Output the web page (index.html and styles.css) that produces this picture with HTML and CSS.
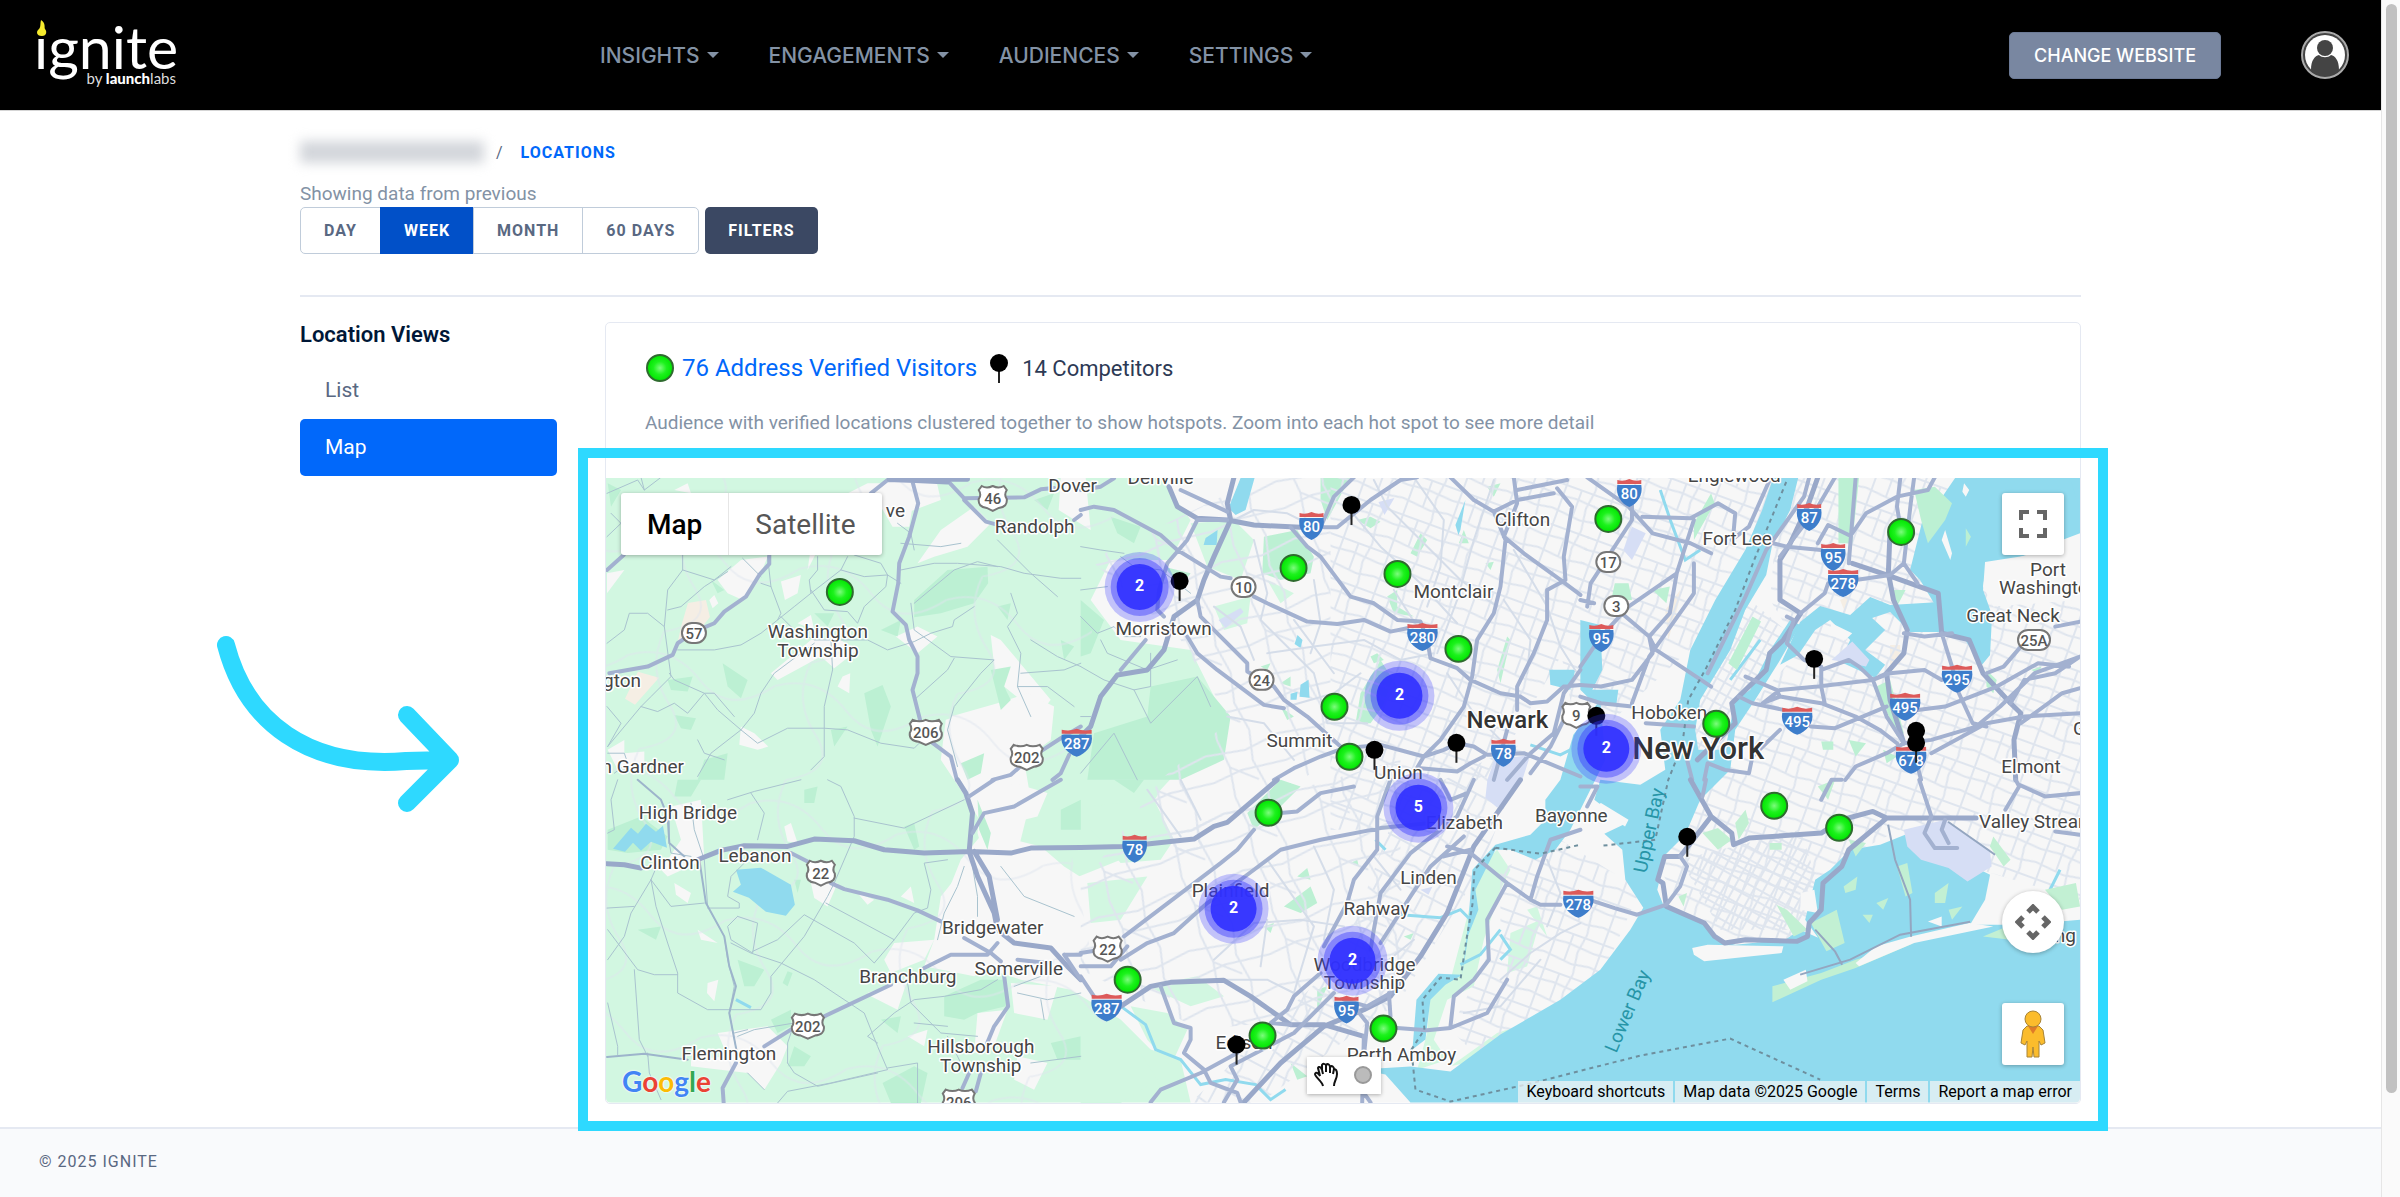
FILE: index.html
```html
<!DOCTYPE html>
<html lang="en">
<head>
<meta charset="utf-8">
<title>Ignite – Locations</title>
<meta name="viewport" content="width=device-width, initial-scale=1">
<link rel="stylesheet" href="styles.css">
</head>
<body>
<div class="app">
  <header class="topbar">
    <a class="logo" href="#" aria-label="Ignite by launchlabs">
      <svg viewBox="0 0 144 72" width="144" height="72" aria-hidden="true">
        <path class="flame" d="M5 1c5 3 3 7 4 9 2 2 2 7-3 7-6 0-6-5-3-7 2-2 1-5 2-9z"/>
        <text class="logo-word" x="-2" y="50">ıgnite</text>
        <text class="logo-by" x="140" y="65" text-anchor="end">by <tspan class="logo-bold">launch</tspan>labs</text>
      </svg>
    </a>
    <nav class="nav">
      <a class="nav-link" href="#">INSIGHTS</a>
      <a class="nav-link" href="#">ENGAGEMENTS</a>
      <a class="nav-link" href="#">AUDIENCES</a>
      <a class="nav-link" href="#">SETTINGS</a>
    </nav>
    <button class="change" type="button">CHANGE WEBSITE</button>
    <a class="avatar" href="#" aria-label="Account">
      <svg viewBox="0 0 48 48" width="48" height="48">
        <circle cx="24" cy="24" r="23" fill="#444" stroke="#aaa" stroke-width="2"/>
        <circle cx="24" cy="24" r="20" fill="#fff"/>
        <circle cx="24" cy="17" r="8" fill="#444"/>
        <path d="M10 39c0-10 4-14 8-15 3 3 9 3 12 0 4 1 8 5 8 15-7 8-21 8-28 0z" fill="#444"/>
      </svg>
    </a>
  </header>

  <main class="page">
    <nav class="crumbs" aria-label="Breadcrumb">
      <span class="redacted" aria-hidden="true"></span>
      <span class="slash">/</span>
      <a href="#">LOCATIONS</a>
    </nav>
    <p class="showing">Showing data from previous</p>
    <div class="ranges">
      <div class="group">
        <button type="button">DAY</button>
        <button type="button" class="active">WEEK</button>
        <button type="button">MONTH</button>
        <button type="button">60 DAYS</button>
      </div>
      <button type="button" class="filters">FILTERS</button>
    </div>
    <hr class="rule">

    <div class="columns">
      <aside class="side">
        <h2>Location Views</h2>
        <a href="#">List</a>
        <a href="#" class="current">Map</a>
      </aside>

      <section class="card">
        <div class="card-head">
          <div class="legend">
            <svg class="ico" viewBox="-15 -15 30 30" width="30" height="30" aria-hidden="true"><use href="#dot"/></svg>
            <a href="#">76 Address Verified Visitors</a>
            <svg class="ico pin-ico" viewBox="-10 -10 20 30" width="20" height="30" aria-hidden="true"><use href="#pin"/></svg>
            <span>14 Competitors</span>
          </div>
          <p>Audience with verified locations clustered together to show hotspots. Zoom into each hot spot to see more detail</p>
        </div>

        <div class="map">
          <svg class="canvas" viewBox="605 478 1475 625" role="img" aria-label="Map of New York and northern New Jersey">
            <defs>
              <radialGradient id="glow"><stop offset="0" stop-color="#7dfb7d"/><stop offset=".5" stop-color="#1df21d"/><stop offset="1" stop-color="#00e400"/></radialGradient>
              <g id="dot"><circle r="13" fill="url(#glow)" stroke="#2f6b2f" stroke-width="2"/></g>
              <g id="pin"><path d="M0 0V20" stroke="#222" stroke-width="2"/><circle r="9"/></g>
              <g id="cluster"><circle r="35" fill="#3333ff" opacity=".27"/><circle r="29" fill="#3333ff" opacity=".42"/><circle r="23" fill="#3030ff" opacity=".9"/></g>
              <g id="is"><path d="M-12-8H12C14 2 8 11 0 14-8 11-14 2-12-8z" fill="#3d7dcb"/><path d="M-12-9V-13Q-6-11 0-14 6-11 12-13V-9z" fill="#dd5a5a"/></g>
              <g id="is3"><path d="M-15-8H15C17 3 9 11 0 14-9 11-17 3-15-8z" fill="#3d7dcb"/><path d="M-15-9V-13Q-7-11 0-14 7-11 15-13V-9z" fill="#dd5a5a"/></g>
              <path id="us" d="M-11-12Q-6-9 0-12 6-9 11-12L14-8Q11-3 14 1 15 9 6 10L0 13-6 10Q-15 9-14 1-11-3-14-8z" fill="#fff" stroke="#777" stroke-width="2"/>
              <path id="us3" d="M-13-12Q-6-9 0-12 6-9 13-12L16-8Q13-3 16 1 17 9 7 10L0 13-7 10Q-17 9-16 1-13-3-16-8z" fill="#fff" stroke="#777" stroke-width="2"/>
              <rect id="st" x="-12" y="-10" width="24" height="20" rx="10" fill="#fff" stroke="#777" stroke-width="2"/>
              <rect id="st3" x="-16" y="-10" width="32" height="20" rx="10" fill="#fff" stroke="#777" stroke-width="2"/>
              <pattern id="g1" width="46" height="38" patternUnits="userSpaceOnUse" patternTransform="rotate(28)"><path class="net" d="M0 8H46M0 25L24 29 46 25M9 0V38M30 0L33 20 30 38M20 8V27"/></pattern>
              <pattern id="g2" width="48" height="42" patternUnits="userSpaceOnUse" patternTransform="rotate(20)"><path class="net" d="M0 4H48M0 16L20 14 48 16M0 30L30 33 48 30M6 0V42M22 4V33M35 0L32 20 35 42"/></pattern>
              <pattern id="g3" width="9" height="11" patternUnits="userSpaceOnUse" patternTransform="rotate(29)"><path class="net" d="M0 3H9M3 0V11"/></pattern>
              <pattern id="g4" width="76" height="60" patternUnits="userSpaceOnUse" patternTransform="rotate(-18)"><path class="net" d="M0 12L40 18 76 12M0 40L30 36 76 40M16 0L20 30 16 60M50 0L44 30 50 60M20 30L44 50"/></pattern>
              <pattern id="g5" width="150" height="120" patternUnits="userSpaceOnUse" patternTransform="rotate(12)"><path class="net" d="M0 30Q40 10 75 40T150 30M30 0Q20 40 50 70T30 120"/></pattern>
            </defs>

            <rect x="605" y="478" width="1475" height="625" fill="#f7f7f7"/>

            <!-- countryside -->
            <path class="green" d="M605 478H890L873 500 900 515 940 500 935 478H1060L1058 510 1090 530 1085 478H1160L1190 520 1170 560 1110 560 1090 600 1120 640 1190 650 1215 700 1225 720 1160 790 1120 860 1070 880 1015 860 1030 800 1020 740 1050 700 1000 640 990 635 995 680 1020 700 995 705 945 720 940 760 960 790 985 830 960 860 940 910 935 950 960 960 1020 980 1070 990 1120 1020 1150 1050 1180 1060 1190 1103H605z"/>
            <g class="land" transform="translate(580 440) scale(.3334)">
              <path d="M780 170L860 130 930 130 1000 170 985 260 935 260 900 200zM1010 370L1080 270 1180 200 1230 250 1160 320 1060 350zM410 420L480 360 560 350 540 400 485 480 440 460zM600 425L660 405 650 460 612 480zM690 320L720 310 680 390zM650 550L690 525 700 570zM690 600L770 595 830 630 760 685 720 650 590 720 570 700zM480 860L520 880 562 920 530 930 475 915zM78 400L130 390 78 460zM770 740L785 710 808 700 805 760zM945 590L1010 560 1070 590 1010 640zM280 150L320 130 330 160zM385 480L400 465 412 490 395 505zM80 930L130 900 130 940 190 935 190 975 110 990zM1110 830L1250 790 1340 760 1420 800 1410 900 1330 960 1200 1010 1130 1000z"/>
            </g>
            <g class="land" transform="translate(580 780) scale(.3334)">
              <path d="M270 80L360 60 370 240 260 290 240 270 300 180zM610 140L630 130 650 190 620 185zM690 310L770 310 740 380 700 355zM280 310L330 340 320 370 285 345zM380 610L412 600 400 665 378 640zM350 450L410 490 360 480zM410 760L560 740 620 800 600 850 550 930 500 880 330 860 330 840 440 830zM860 640L980 600 950 690 870 650zM940 490L1060 480 1030 540 930 580 910 540zM980 770L1040 750 1030 800zM960 350L990 320 1000 370zM830 340L880 360 860 375zM1080 350L1160 250 1200 330 1220 440 1300 520 1180 590 1030 560 1060 480z"/>
              <path d="M1200 60L1300 10 1400 40 1370 110 1290 130 1300 180 1380 200 1450 260 1560 330 1540 420 1380 400 1290 280 1210 230 1190 160zM1290 610L1430 620 1400 720 1300 700zM1190 700L1280 690 1240 800 1180 820zM1310 830L1400 850 1360 930 1300 900z"/>
            </g>
            <g class="wood" transform="translate(580 440) scale(.3334)">
              <path d="M1000 480L1100 390 1220 380 1222 430 1180 490 1080 520 1000 532zM850 760L905 735 930 800 890 920 870 870zM425 670L500 720 480 775 440 740zM260 720L335 710 320 755 270 750zM280 825L345 835 330 870 300 865zM700 520L760 520 740 560zM900 570L960 540 950 590zM750 870L800 860 760 920zM1250 500L1290 490 1280 540zM1230 690L1290 680 1270 740 1290 780 1260 810zM1360 180L1420 160 1400 210zM390 420L430 450 410 460zM1140 970L1210 940 1200 1000 1160 1020zM370 960L440 940 430 1020 350 1020zM1440 600L1480 620 1450 660zM80 130L120 150 90 200z"/>
            </g>
            <g class="wood" transform="translate(580 780) scale(.3334)">
              <path d="M80 150L180 110 260 170 240 210 140 220 80 210zM290 0L360 0 330 50 280 50zM1090 650L1200 600 1275 600 1275 680 1190 700 1150 720 1090 710zM905 910L1000 860 1040 880 1020 970 930 970zM640 800L690 830 670 860 620 860zM570 720L630 690 630 740 590 760zM170 450L240 440 225 480zM470 540L550 570 520 620 490 620zM620 575L635 580 620 620 605 610zM970 140L1000 130 1015 200 1000 210zM640 300L660 300 650 340zM1190 60L1230 160 1220 210 1195 150zM900 720L960 710 950 760zM1440 90L1500 60V150H1440zM1410 790L1500 770V840L1430 840zM670 30L710 20 700 70 670 70z"/>
            </g>
            <g class="wood" transform="translate(1080 440) scale(.3334)">
              <path d="M40 880L200 830 210 740 350 710 450 830 430 960 300 1020 20 1020zM0 480L70 540 30 640 0 650zM720 112L810 112 740 240 720 180zM550 290L650 270 700 350 690 400 600 420 545 400zM830 240L870 230 900 245 870 265zM990 340L1020 280 1040 300 1010 350zM840 760L900 660 950 740 870 850 825 850zM870 650L890 640 910 660 880 670zM920 470L950 450 950 500 1000 530 940 520zM1220 140L1260 130 1240 170zM1215 370L1240 365 1230 390zM1150 270L1165 310 1135 310zM600 730L630 710 630 740zM540 680L570 670 560 690zM1250 690L1280 590 1290 600 1260 730zM600 800L640 830 620 840zM90 230L180 260 160 310 110 280zM250 380L330 400 300 440z"/>
              <path class="green" d="M460 240L520 300 480 420 380 380 330 250zM400 500L510 470 500 550 430 570zM560 420L640 460 600 490zM60 130L240 170 140 210 40 200z"/>
            </g>
            <g class="wood" transform="translate(1080 780) scale(.3334)">
              <path d="M500 100L600 0 660 20 590 90 520 150zM590 20L630 10 640 40zM610 380L690 320 710 370 660 400zM650 290L680 265 690 300zM970 470L1000 460 990 480zM550 440L580 430 570 460zM710 630L740 620 710 690zM100 0L190 0 160 40zM60 140L120 130 110 180zM630 850L680 890 650 900zM810 250L830 240 835 260z"/>
              <path class="green" d="M20 80L220 60 280 180 240 240 120 250 60 180 30 150zM20 310L200 290 120 420 30 430zM200 620L350 590 430 650 330 680zM150 680L260 700 320 750 270 860 200 780zM0 700L80 720 180 820 230 900 120 970 0 970zM1200 260L1250 210 1290 270 1260 330 1210 480 1180 620 1100 660 1060 780 1100 840 1010 870 1040 760 1050 640 1110 600zM1290 460L1380 420 1340 560 1280 580zM1340 390L1370 380 1400 470zM1250 760L1400 710 1290 820 1110 860z"/>
            </g>
            <path class="sand" d="M680 627L687 603 705 600 709 617 690 641 677 641zM637 672L658 678 634 705 624 699zM1840 600L1850 595 1845 613zM1665 610L1680 590 1678 605 1668 640zM1890 645H1900V665H1890z"/>

            <!-- street grids -->
            <path fill="url(#g5)" d="M605 478H1120L1060 800 1120 1103H605z" opacity=".5"/>
            <path fill="url(#g4)" d="M1090 560L1260 478H1330V760L1200 850 1100 860 1160 780 1230 720 1180 640z"/>
            <path fill="url(#g4)" d="M1080 870L1260 800 1400 760V1010L1200 1030 1080 970z"/>
            <path fill="url(#g2)" d="M1330 478H1600L1570 640 1500 760 1420 830 1330 830z"/>
            <path fill="url(#g1)" d="M1400 800L1530 740 1480 870 1400 1000 1260 1103H1190L1340 960z"/>
            <path fill="url(#g2)" d="M1600 478H1780L1700 640 1580 750 1560 650z"/>
            <path fill="url(#g2)" d="M1500 870L1560 840 1640 890 1600 980 1480 1060 1450 1030 1500 930z"/>
            <path fill="url(#g2)" d="M1780 478H1950V600L2080 560V900L1980 870 1900 830 1840 860 1800 950 1700 940 1660 870 1720 740 1800 650 1770 600z"/>
            <path fill="url(#g3)" d="M1750 600L1785 630 1730 730 1720 760 1690 750 1700 690zM1680 860L1800 830 1820 890 1800 930 1720 930z"/>

            <!-- water -->
            <g class="water">
              <path d="M1773 478H1798L1790 510 1772 545 1766 575 1745 610 1730 650 1700 700 1695 730 1698 750 1725 750 1735 700 1750 690 1770 650 1790 620 1800 625 1780 660 1755 700 1735 730 1730 770 1700 800 1685 835 1665 855 1657 890 1663 905 1680 911 1700 920 1715 940 1735 945 1785 940 1800 930 1818 938 1805 920 1815 880 1830 870 1850 850 1880 845 1905 835 1960 860 1990 875 1985 900 1970 925 1990 925 2025 925 2080 920V1103H1410L1385 1075 1360 1070 1410 1067 1450 1072 1500 1035 1560 1000 1600 970 1630 930 1643 908 1625 880 1622 850 1604 834 1625 824 1594 800 1600 780 1640 785 1665 770 1660 730 1680 700 1690 650 1715 600 1745 550 1762 510z"/>
              <path d="M1955 478H2080V535L2060 560 2030 555 1985 562 1983 590 1992 615 1990 655 1982 665 1965 640 1943 632 1935 605 1920 580 1910 570 1920 530 1925 510 1940 500z"/>
              <path d="M1800 622L1820 606 1850 615 1870 597 1890 605 1940 602 1943 632 1910 632 1890 612 1872 618 1885 630 1865 650 1885 665 1875 678 1840 662 1850 640 1830 620 1815 630 1798 655 1780 665z"/>
              <path d="M1573 735L1600 700 1605 760 1570 830 1555 850 1535 860 1510 850 1495 850 1475 890 1478 910 1468 935 1462 975 1445 985 1430 1000 1425 1040 1412 1050 1416 1000 1438 974 1462 975 1468 920 1472 870 1495 845 1530 835 1545 820 1545 800 1560 780z"/>
              <path d="M1580 620L1600 625 1602 670 1592 690 1618 690 1616 705 1590 700 1580 690zM1549 670L1575 670 1570 690 1550 685z"/>
              <path d="M1240 478H1254L1245 510 1235 515 1228 508zM1205 538L1217 530 1216 545 1203 545zM1297 635L1302 640 1300 648 1294 644zM1300 685L1308 680 1309 698 1299 697zM1290 694L1297 692 1296 700 1290 700z"/>
              <path d="M735 870L760 868 790 885 794 905 785 916 765 912 748 898 732 892 740 885zM612 849L630 828 637 834 645 824 655 832 662 826 666 848 650 842 640 851 632 843 624 852zM1465 500L1460 530 1458 535 1455 525zM2070 478L2080 480V510z"/>
            </g>
            <path class="creek" d="M1122 1008L1145 1025 1155 1050 1180 1060 1200 1085 1225 1080 1255 1085 1270 1100 1285 1090M1660 490L1670 520 1685 560 1700 550M1400 915L1440 918 1460 910 1470 920M1500 930L1480 955 1460 965M1500 935L1510 950 1500 960M1760 640L1730 680M2060 870L2050 890 2070 900M1375 840L1385 850M1590 740L1560 755 1530 745M735 1000L750 1008"/>
            <g class="land" transform="translate(1580 780) scale(.3444 .3334)">
              <path d="M325 505L370 495 590 500 585 520 360 545 330 525z"/>
              <path class="wood" d="M558 620L700 580 800 540 970 490 800 565 700 600 558 668zM670 430L745 390 768 490 715 515zM570 375L600 390 660 450 620 470zM765 320L805 290 800 330 770 340zM860 370L895 355 880 390zM920 260L950 250 965 340 945 350zM1030 340L1070 310 1060 370 1030 370zM820 405L850 405 840 430zM780 180L830 190 800 230zM1070 390L1110 380 1080 420zM1350 330L1440 310 1452 380 1400 390zM1170 470L1240 440 1250 480z"/>
              <path d="M800 550L860 500 960 470 1130 430 1200 440 970 490 810 560zM590 600L655 570 660 605 610 630zM60 70L140 120 130 140 40 80zM640 340L680 330 690 400 640 390zM1010 425L1050 410 1050 440z"/>
              <path class="air" d="M940 150L1060 120 1190 210 1195 260 1125 305 1070 265 990 240 950 200z"/>
              <path class="wood" d="M355 160L400 145 440 180 400 210zM450 130L480 90 490 130 460 180zM690 20L740 0 720 60zM1200 170L1250 240 1230 260 1190 200zM285 350L310 340 300 380zM550 190H585V210H550z"/>
            </g>
            <g class="wood" transform="translate(1580 440) scale(.3444 .3334)">
              <path d="M970 150L1030 140 1080 190 1060 240 1010 310 990 240zM1120 265L1135 290 1120 320zM430 670L500 530 525 545 455 690zM750 112H810L790 310 750 310zM100 430L140 430 150 480 90 480zM210 450L260 440 250 490zM900 450L945 450 920 500zM330 250L380 160 390 190 330 300zM1180 690L1210 720 1200 760 1180 740zM700 905H735V930H705zM780 900L830 910 800 950zM880 930L920 950 890 970zM1310 690L1340 680 1330 700zM860 740L900 720 940 880 920 890z"/>
              <path class="land" d="M730 550L790 580 770 600 720 585zM1060 270L1080 340 1075 360 1050 300zM1115 130L1130 150 1120 170 1110 155zM1180 380L1220 370 1340 330 1400 300 1452 280V480L1200 500 1170 440z"/>
              <path class="air" d="M730 660L790 605 840 660 830 680 760 665zM150 260L190 280 150 360 125 330z"/>
            </g>
            <path class="air" d="M1494 760L1530 755 1522 780 1497 808 1485 798 1487 780zM1218 620L1240 608 1243 612 1225 628zM1378 502L1394 498 1384 515zM1420 890L1432 887 1428 895z"/>

            <!-- local roads -->
            <g class="minor" transform="translate(580 440) scale(.3334)">
              <path d="M78 160L170 120 190 150 240 112M190 150L180 112M78 290L120 250 90 220M305 345L305 390 260 450 250 560 270 710 210 770 180 800 80 920M305 390L400 420 450 380M260 510L300 500 370 440 440 395M560 350L570 440 600 520 590 540 640 500 690 460 780 390 800 350M690 460L685 420 710 390 710 350M690 450L730 510 800 515 830 550 850 500 915 440 920 405 850 410 780 390M540 430L570 440M600 530L640 570 700 600 860 600 920 630 1000 605 1050 580 1115 560 1120 540 1180 500M290 630L400 630 480 615 540 580 590 540M750 600L755 690 730 800 730 870 730 950 690 990M700 610L580 700 540 760 520 820 480 870 390 940 350 1010M480 870L530 910 620 865 730 865 800 870 900 910 1000 925 1015 910M480 870L410 810 370 760 280 720 265 700M180 800L230 815 280 790 320 820 370 760 400 760 460 830M78 610L130 570 145 520 200 520 250 560M78 800L120 850 80 920M485 355L540 410M820 345L900 370 920 405 960 430M960 390L1060 370 1130 370 1260 380 1330 400 1440 415 1500 415M1000 490L1120 390 1190 365 1250 380M990 490L1000 570 1110 650 1240 660 1200 700 1120 800 1100 870 1130 980M1250 300L1350 400 1430 470M1290 460L1310 520 1280 560 1320 640 1310 740 1350 830M1350 600L1430 650 1500 680M1000 780L1100 690 1120 655M1310 740L1400 740 1480 800M960 310L1080 320 1140 310M950 250L990 280 1000 330M350 900L370 940 430 960M80 940L130 940 140 970 100 1000M1320 700L1450 690 1500 670"/>
            </g>
            <g class="minor" transform="translate(580 780) scale(.3334)">
              <path d="M110 0L90 60 100 150 80 160M265 70L265 190 270 220 330 230M330 70L340 150 370 240 380 380 430 470 440 540 460 620 445 700 470 830M240 230L210 300 270 380 370 370M210 300L150 400 130 470 80 540M210 300L225 380 260 490 290 580 290 640 380 690 450 690 540 690 570 640 570 590 670 470 740 350 760 310 820 170 820 110 780 20 740 0M78 385L160 380M80 450L170 570 220 585 290 585M160 570L175 780 200 830M80 670L110 800 110 825M200 820L205 880 240 960M510 40L550 100 530 180M440 60L520 35 660 0M820 115L970 145 1150 60M380 385L475 385 475 370 440 350 450 290 490 250M470 410L440 440 450 480 515 520 530 430 470 410M515 515L590 480 670 405 820 490 880 550 940 480 1000 400 1040 385 1050 330 1030 250 1100 240M735 370L940 480M450 490L510 520 600 550 700 600 850 700 890 800 920 870 750 910 620 935 590 970M890 790L860 770 940 700 1000 660 1090 650 1200 630 1250 600M980 610L990 670 1080 760 1190 770M500 750L460 760M620 850L640 880 710 920 890 880M920 865L1010 850 1010 970M500 880L550 930M1350 850L1500 830M1300 620L1380 590M1310 640L1400 660 1500 640M1380 660L1390 720M1000 730L1100 740M620 850L620 790 640 730 520 750 470 770M1070 480L1090 400 1130 320 1150 260M1260 260L1330 350 1480 410M1170 230L1190 350 1190 410M1100 770L1150 870"/>
              <path class="wide" d="M170 0L240 60 260 110 265 190 310 230M78 832L190 822 320 840M355 240L375 370 430 470 445 560 465 620 445 700 470 830"/>
            </g>
            <g class="minor" transform="translate(1080 440) scale(.3334)">
              <path d="M0 530L50 580 100 560 130 590 180 590M0 680L70 720 160 750 210 740 210 640M160 750L210 850 350 710 390 800M0 1000L100 880 170 1020M0 830L30 830M0 450L80 440M0 320L60 330 130 340M120 350L160 380 240 390 330 460M60 600L80 640 200 690 290 660"/>
            </g>
            <g class="pale" transform="translate(1080 440) scale(.3334)">
              <path d="M460 240L520 210 620 220 660 240M520 300L560 460 540 540 640 640 700 700 740 850 860 850M400 500L480 560 520 660M560 640L700 620 850 600 960 660 1060 640M700 420L720 550 690 640M640 540L760 700M880 120L920 200 1060 340 1140 420 1250 500M800 200L900 320 1020 430 1130 550M1000 112L1090 240 1080 380 1040 500M620 800L760 760 840 700M440 830L550 850 640 960M940 450L1010 560M1240 120L1180 300 1130 480 1070 640M1300 330L1400 500 1440 620 1490 700M1270 480L1350 600 1340 700M1100 700L1180 820 1260 900"/>
            </g>
            <g class="pale" transform="translate(1080 780) scale(.3334)">
              <path d="M560 240L700 440 640 640M700 200L760 330 730 480M400 540L520 430 660 420 790 440M420 600L560 600 640 640M880 230L960 330M1000 480L900 560 930 640M1260 600L1350 520 1440 460 1500 430M1150 700L1260 680 1380 540M1400 240L1440 340 1400 440M300 0L360 120M200 30L300 170M560 420L540 560"/>
            </g>

            <!-- highways -->
            <g class="major" transform="translate(580 440) scale(.3334)">
              <path d="M78 390L128 345M565 345L565 372 535 405 495 470 430 515 400 550 340 575 290 610 275 645 200 680 85 700M870 160L920 120 1100 122 1150 175 1330 172 1380 148 1420 144M1150 180L1215 245 1290 265M995 125L1012 190 985 290 955 370 952 430 935 515 975 555 985 600 1010 650 1010 700 995 750 1015 830 1030 890 1110 950 1128 1020M1235 1020L1290 1005 1340 960 1440 895 1500 860M1465 945L1440 1000 1415 1020M1480 240L1500 225"/>
              <path class="big" d="M925 118L1100 126M930 116L1160 118"/>
            </g>
            <g class="major" transform="translate(580 780) scale(.3334)">
              <path class="big" d="M78 252L130 255 180 265M350 240L420 212 490 198 620 200 700 178 820 183 910 210 1030 220 1170 215 1290 220 1350 205 1500 203M1130 0L1155 40 1175 100 1165 215 1190 290 1240 400 1250 450 1300 490 1410 505 1460 560 1500 600M1180 215L1225 290 1250 420"/>
              <path d="M630 220L680 245M750 310L790 328 920 360 1010 392 1080 425M1150 475L1230 520 1260 545M1440 0L1300 80 1210 100 1175 160M1030 565L1110 525 1220 525 1250 490M1450 525H1500M1310 540L1400 550M730 710L930 615M630 750L550 800M465 850L425 925 428 968M1270 590L1282 680 1240 740 1215 800M1165 880L1145 925M1200 880L1185 935M1240 0L1165 50M1500 600L1450 525"/>
            </g>
            <g class="major" transform="translate(1080 440) scale(.3334)">
              <path class="big" d="M460 112L440 190 450 240 400 350 370 420 350 480 280 530 250 630 200 690 110 705 60 770 30 860 0 890M265 140L290 200 350 235 440 240 520 255 660 262"/>
              <path d="M0 210L40 200 100 210 240 285 290 330 420 410 450 415M300 150L440 215M440 240L350 240 320 300 260 370 235 450 230 510 250 530M195 600L120 690M0 150L60 140 100 115M350 480L360 530 420 590 500 670 500 695 580 740 610 780 680 830 780 920M610 805L550 795 410 690 350 640 320 590M520 470L560 490 680 545 770 552 850 540 930 575 980 565M630 262L680 320 720 350 810 470 880 490 950 540 1020 545 1040 600 1050 655 1130 685 1170 720 1260 760 1320 770 1350 790 1400 785 1450 740 1500 735M730 262L770 262 870 180 960 120 1010 112M720 262L760 170 820 112M1110 112L1180 180 1240 215 1275 300 1260 440 1240 520 1190 600 1175 710 1150 800 1080 900 1030 950 1000 1000M1240 215L1310 180 1420 160M1300 112L1310 190 1270 290 1330 340 1440 420 1500 465M1310 150L1460 120M1430 145L1475 200 1450 350 1455 420 1400 450 1400 540 1360 640 1310 740 1310 810M580 1020L640 985 720 950 790 925 900 915 1030 950 1090 930 1130 910 1180 920 1220 945 1330 940 1380 960 1500 1010M1020 985L1130 995 1170 970 1210 950M1240 1020L1280 870M1280 1020L1350 940 1420 880 1450 760 1500 690M1350 1000L1410 920 1450 840"/>
            </g>
            <g class="major" transform="translate(1080 780) scale(.3334)">
              <path class="big" d="M0 203L130 200 340 178 400 140 440 128 590 0M1320 0L1180 200 1100 400 1020 530 930 650 850 690 730 740 600 850 490 968M120 680L210 620 270 608 430 602 510 650 630 735 730 735 850 770"/>
              <path d="M600 100L650 95 720 40 820 20M520 150L470 210 420 250 130 470M480 300L600 210 720 180 900 145 1050 130M280 460L380 370 480 300M0 520L60 510M120 540L200 490 280 460M0 560L90 560 140 500M930 0L890 110 890 210 820 300 800 370 730 500M1180 0L1130 110 990 220 900 340 880 450 870 510M1150 170L1050 260 990 350 900 490M1100 200L1170 220 1280 310 1350 360 1380 375 1440 375M1090 230L1170 210M1280 310L1220 420 1225 540 1180 600 1120 650 1110 740M950 745L1040 752 1110 745 1220 700 1280 600M1500 150L1410 180 1370 290 1350 360M630 735L570 730 620 690 640 650 720 580M430 968L470 900 450 860 640 760 760 640M210 968L240 930 360 880 470 820M240 620L280 730 330 745 330 780 310 820 370 870 390 910 470 940 480 968M850 770L845 968M925 640L930 710M820 680L860 730 850 830M0 590L40 650M870 968L850 940M790 660L860 680 930 640M1080 0L1110 60 1160 40"/>
            </g>
            <g class="major" transform="translate(1580 440) scale(.3444 .3334)">
              <path class="big" d="M690 112L660 200 610 310 580 360 580 480 640 520 590 600 550 640 540 690 440 790 450 850 340 960M790 370L890 405 1040 460 1050 580 1130 600 1170 700 1250 790 1280 820 1260 900 1265 1020M900 270L895 400 910 480 950 570 940 640 890 700 900 780 940 910"/>
              <path d="M20 112L140 200 210 280 320 310 380 340M150 180L150 240 30 430 20 500 M180 230L320 235 400 190 450 220 445 280M0 480L40 490M330 240L280 400 140 500 60 590 0 680M120 520L200 590 220 630 380 740M200 590L210 640 150 720 60 740 0 735M200 590L260 520 280 400M330 370L330 460 200 650 150 790M550 120L490 260 440 300M800 112L780 370M665 112L650 170 540 330 480 470 370 700M740 112L690 200 580 350M700 330L600 320 560 310M690 310L720 255 780 285M1030 112L1010 150 920 170 830 220 790 280M930 112L920 200 935 290M970 112L960 190 940 370 980 430M800 420L900 405 940 370M640 520L710 460 720 430M600 530L620 540 600 610 650 660 700 680 700 740 710 790M700 690L780 660 810 680 850 720 890 830 940 910M850 720L890 700M530 790L580 750 690 740 850 720 900 700 1000 690 1050 720M530 790L580 770M480 710L570 750 580 770 700 790 800 830 870 870 920 910M460 770L500 790 590 810M670 860L740 865 890 800M770 1020L800 980 890 940 940 910 1020 900 1150 860 1220 800 1320 700 1452 650M980 810L1060 800 1210 740 1330 670 1420 680M1050 580L1080 680 1100 760 1140 850 1180 860M1180 700L1230 680 1280 620M1380 560L1452 545M1020 940L1180 850 1290 830 1452 820M1250 790L1290 720 1380 700 1452 650M1280 850L1400 760 1452 745M940 580L1000 590 1080 580M980 980L990 1020M360 1020L370 970 420 990 490 1000 500 950 580 870M310 960L325 1020M0 770L60 790 150 800M190 850L330 860"/>
            </g>
            <g class="major" transform="translate(1580 780) scale(.3444 .3334)">
              <path class="big" d="M320 0L380 110 440 160 445 195 490 175 700 160 760 120 850 95 890 115 1030 115 1150 115M890 115L780 210 760 260 705 310 700 390 665 430 660 470 630 485 480 480 420 490 390 470 360 430 250 380 240 310 225 300 245 230 290 230 380 110"/>
              <path d="M290 230L310 260 290 320 250 375 165 405 100 385 40 365M700 60L730 0 760 0M985 0L1020 110 1000 160 1030 205 1095 205M1060 120L1050 150 1070 190M1235 90L1275 20 1265 0M1275 15L1350 50 1452 40M365 0L355 50M1380 155L1452 165M0 20L50 20 20 80"/>
            </g>
            <path class="rail" d="M1888 825L1895 860 1910 900 1911 937M1815 930L1835 952 1842 965M1800 975L1850 960 1900 935 1970 922M1948 822L1995 855"/>
            <path class="border" d="M1786 482L1754 560 1735 610 1705 670 1688 700 1682 745 1668 780 1655 840 1602 846M1495 848L1540 854 1580 845M1495 848L1474 870 1472 905 1466 940 1460 980 1440 978 1422 1000 1424 1030 1411 1050 1415 1090 1450 1102 1530 1084 1640 1056 1730 1039 1820 1080"/>

            <!-- place names -->
            <g class="place">
              <text x="885" y="517">ve</text><text x="1034" y="533" class="mid">Randolph</text><text x="1072" y="492" class="mid">Dover</text>
              <text x="817" y="638" class="mid">Washington</text><text x="817" y="657" class="mid">Township</text>
              <text x="640" y="687" class="end">Washington</text><text x="683" y="773" class="end">Glen Gardner</text>
              <text x="1160" y="484" class="mid">Denville</text><text x="1163" y="635" class="mid">Morristown</text><text x="1453" y="598" class="mid">Montclair</text>
              <text x="1522" y="526" class="mid">Clifton</text><text x="1299" y="747" class="mid">Summit</text><text x="1398" y="779" class="mid">Union</text>
              <text x="1734" y="482" class="mid">Englewood</text><text x="1737" y="545" class="mid">Fort Lee</text>
              <text x="2048" y="576" class="mid">Port</text><text x="1999" y="594">Washington</text><text x="2013" y="622" class="mid">Great Neck</text>
              <text x="1669" y="719" class="mid">Hoboken</text><text x="2031" y="773" class="mid">Elmont</text><text x="2073" y="735">Garden City</text>
              <text x="687" y="819" class="mid">High Bridge</text><text x="669" y="869" class="mid">Clinton</text><text x="754" y="862" class="mid">Lebanon</text>
              <text x="992" y="934" class="mid">Bridgewater</text><text x="1018" y="975" class="mid">Somerville</text><text x="907" y="983" class="mid">Branchburg</text>
              <text x="728" y="1060" class="mid">Flemington</text><text x="980" y="1053" class="mid">Hillsborough</text><text x="980" y="1072" class="mid">Township</text>
              <text x="1230" y="897" class="mid">Plainfield</text><text x="1464" y="829" class="mid">Elizabeth</text><text x="1428" y="884" class="mid">Linden</text>
              <text x="1376" y="915" class="mid">Rahway</text><text x="1364" y="971" class="mid">Woodbridge</text><text x="1364" y="989" class="mid">Township</text>
              <text x="1215" y="1049">Edison</text><text x="1401" y="1061" class="mid">Perth Amboy</text><text x="1571" y="822" class="mid">Bayonne</text>
              <text x="1979" y="828">Valley Stream</text><text x="2076" y="942" class="end">Long</text>
              <text x="1507" y="728" class="mid city">Newark</text><text x="1698" y="759" class="mid metro">New York</text>
            </g>
            <g class="bay">
              <text class="mid" transform="translate(1655 832) rotate(-78)">Upper Bay</text>
              <text class="mid" transform="translate(1633 1014) rotate(-67)">Lower Bay</text>
            </g>

            <!-- route shields -->
            <g class="shield white">
              <g transform="translate(1311 526)"><use href="#is"/><text y="6">80</text></g>
              <g transform="translate(1422 637)"><use href="#is3"/><text y="6">280</text></g>
              <g transform="translate(1503 753)"><use href="#is"/><text y="6">78</text></g>
              <g transform="translate(1076 743)"><use href="#is3"/><text y="6">287</text></g>
              <g transform="translate(1629 493)"><use href="#is"/><text y="6">80</text></g>
              <g transform="translate(1809 517)"><use href="#is"/><text y="6">87</text></g>
              <g transform="translate(1833 557)"><use href="#is"/><text y="6">95</text></g>
              <g transform="translate(1843 583)"><use href="#is3"/><text y="6">278</text></g>
              <g transform="translate(1601 638)"><use href="#is"/><text y="6">95</text></g>
              <g transform="translate(1957 679)"><use href="#is3"/><text y="6">295</text></g>
              <g transform="translate(1905 707)"><use href="#is3"/><text y="6">495</text></g>
              <g transform="translate(1797 721)"><use href="#is3"/><text y="6">495</text></g>
              <g transform="translate(1911 760)"><use href="#is3"/><text y="6">678</text></g>
              <g transform="translate(1134 849)"><use href="#is"/><text y="6">78</text></g>
              <g transform="translate(1106 1008)"><use href="#is3"/><text y="6">287</text></g>
              <g transform="translate(1346 1010)"><use href="#is"/><text y="6">95</text></g>
              <g transform="translate(1578 904)"><use href="#is3"/><text y="6">278</text></g>
            </g>
            <g class="shield">
              <g transform="translate(992 498)"><use href="#us"/><text y="6">46</text></g>
              <g transform="translate(925 732)"><use href="#us3"/><text y="6">206</text></g>
              <g transform="translate(1026 757)"><use href="#us3"/><text y="6">202</text></g>
              <g transform="translate(820 873)"><use href="#us"/><text y="6">22</text></g>
              <g transform="translate(807 1026)"><use href="#us3"/><text y="6">202</text></g>
              <g transform="translate(958 1102)"><use href="#us3"/><text y="6">206</text></g>
              <g transform="translate(1107 949)"><use href="#us"/><text y="6">22</text></g>
              <g transform="translate(1576 715)"><use href="#us"/><text y="6">9</text></g>
              <g transform="translate(693 633)"><use href="#st"/><text y="6">57</text></g>
              <g transform="translate(1243 587)"><use href="#st"/><text y="6">10</text></g>
              <g transform="translate(1261 680)"><use href="#st"/><text y="6">24</text></g>
              <g transform="translate(1608 562)"><use href="#st"/><text y="6">17</text></g>
              <g transform="translate(1616 606)"><use href="#st"/><text y="6">3</text></g>
              <g transform="translate(2034 640)"><use href="#st3"/><text y="6">25A</text></g>
            </g>

            <!-- competitors, visitors and clusters -->
            <use href="#pin" x="1351" y="505"/><use href="#pin" x="1179" y="581"/><use href="#pin" x="1374" y="750"/><use href="#pin" x="1456" y="743"/>
            <use href="#pin" x="1596" y="716"/><use href="#pin" x="1814" y="659"/><use href="#pin" x="1916" y="731"/><use href="#pin" x="1916" y="743"/>
            <use href="#pin" x="1236" y="1045"/><use href="#pin" x="1687" y="837"/>
            <use href="#dot" x="839" y="592"/><use href="#dot" x="1293" y="568"/><use href="#dot" x="1397" y="574"/><use href="#dot" x="1458" y="649"/>
            <use href="#dot" x="1334" y="707"/><use href="#dot" x="1349" y="757"/><use href="#dot" x="1608" y="519"/><use href="#dot" x="1901" y="532"/>
            <use href="#dot" x="1716" y="724"/><use href="#dot" x="1268" y="813"/><use href="#dot" x="1127" y="980"/><use href="#dot" x="1262" y="1036"/>
            <use href="#dot" x="1383" y="1029"/><use href="#dot" x="1774" y="806"/><use href="#dot" x="1839" y="828"/>
            <g class="count">
              <g transform="translate(1139 587)"><use href="#cluster"/><text y="4">2</text></g>
              <g transform="translate(1399 696)"><use href="#cluster"/><text y="4">2</text></g>
              <g transform="translate(1418 808)"><use href="#cluster"/><text y="4">5</text></g>
              <g transform="translate(1606 749)"><use href="#cluster"/><text y="4">2</text></g>
              <g transform="translate(1233 909)"><use href="#cluster"/><text y="4">2</text></g>
              <g transform="translate(1352 961)"><use href="#cluster"/><text y="4">2</text></g>
            </g>
          </svg>

          <div class="types">
            <button type="button" class="on">Map</button>
            <button type="button">Satellite</button>
          </div>
          <button type="button" class="ctl full" aria-label="Toggle fullscreen view">
            <svg viewBox="0 0 28 28" width="28" height="28"><path d="M2 10V2H10M18 2H26V10M26 18V26H18M10 26H2V18" fill="none" stroke="#666" stroke-width="4"/></svg>
          </button>
          <button type="button" class="ctl camera" aria-label="Map camera controls">
            <svg viewBox="-18 -18 36 36" width="36" height="36"><path d="M-5-10L0-15 5-10M-5 10L0 15 5 10M-10-5L-15 0-10 5M10-5L15 0 10 5" fill="none" stroke="#666" stroke-width="5"/></svg>
          </button>
          <button type="button" class="ctl street" aria-label="Drag Pegman onto the map to open Street View">
            <svg viewBox="0 0 26 48" width="26" height="48" stroke="#a88436" stroke-width="1"><path d="M7 16L3 20 1 33 5 35 7 31V47H12L13 37 14 47H19V31L21 35 25 33 23 20 19 16z" fill="#fbbc2c"/><path d="M8 16H18L13 24z" fill="#e07b28" stroke="none"/><circle cx="13" cy="9" r="8" fill="#fbbc2c"/></svg>
          </button>
          <div class="draw">
            <button type="button" aria-label="Stop drawing">
              <svg viewBox="0 0 24 26" width="24" height="26"><path d="M9 24C8 19 1 15 1 12 2 9 5 12 6 14L4 6C5 4 7 5 8 8L8 3C9 1 11 2 12 3 14 1 16 3 16 5 18 3 20 5 20 7 22 7 23 9 23 12 23 17 20 19 20 24" fill="#fff" stroke="#111" stroke-width="2"/><path d="M8 8L9 12M12 3V10M16 5V11M20 7L19 12" stroke="#111" stroke-width="2"/></svg>
            </button>
            <button type="button" aria-label="Draw a circle">
              <svg viewBox="0 0 20 20" width="20" height="20"><circle cx="10" cy="10" r="8" fill="#bbb" stroke="#999" stroke-width="2"/></svg>
            </button>
          </div>
          <a class="google" href="#" aria-label="Google"><span class="b">G</span><span class="r">o</span><span class="y">o</span><span class="b">g</span><span class="g">l</span><span class="r">e</span></a>
          <div class="credits">
            <button type="button">Keyboard shortcuts</button>
            <span>Map data ©2025 Google</span>
            <a href="#">Terms</a>
            <a href="#">Report a map error</a>
          </div>
          <div class="spotlight"></div>
        </div>
      </section>

      <svg class="pointer" viewBox="0 0 246 180" width="246" height="180" aria-hidden="true">
        <path d="M10 11C30 88 92 135 190 127L232 126M191 81L234 126 191 169" fill="none" stroke="#2ed9ff" stroke-width="18" stroke-linecap="round" stroke-linejoin="round"/>
      </svg>
    </div>
  </main>

  <footer class="foot">© 2025 IGNITE</footer>
</div>
<div class="scroll" aria-hidden="true"><div class="thumb"></div></div>
</body>
</html>
```
FILE: styles.css
```css
* { box-sizing: border-box; }
body {
  margin: 0;
  min-height: 100vh;
  display: flex;
  background: #fff;
  color: #2d3a55;
  font-family: "Roboto", "Liberation Sans", sans-serif;
  font-size: 20px;
}
a { color: #0168fa; text-decoration: none; }
button { font: inherit; border: 0; margin: 0; padding: 0; background: none; }
h2, p { margin: 0; }
svg { display: block; }

.app { flex: 1; min-width: 0; display: flex; flex-direction: column; }

/* top bar */
.topbar {
  display: flex;
  align-items: center;
  height: 111px;
  padding: 0 32px 0 36px;
  background: #000;
  border-bottom: 1px solid #d5d5d5;
  font-family: "Inter", sans-serif;
}
.logo svg { overflow: visible; }
.flame { fill: #f6ea2d; }
.logo-word { font: 400 59px "Lato", sans-serif; fill: #fff; }
.logo-by { font: 400 15px "Lato", sans-serif; fill: #ddd; }
.logo-bold { font-weight: 900; fill: #fff; }
.nav { display: flex; gap: 50px; margin: 0 auto 0 420px; }
.nav-link {
  display: flex;
  align-items: center;
  gap: 7px;
  color: #8392a5;
  font-size: 21px;
  font-weight: 500;
}
.nav-link::after {
  content: "";
  border: 6px solid transparent;
  border-top-color: #8392a5;
  border-bottom-width: 0;
}
.change {
  height: 47px;
  padding: 0 24px;
  border: 1px solid #6c7a96;
  border-radius: 5px;
  background: #7987a1;
  color: #fff;
  font-size: 18px;
  font-weight: 500;
}
.avatar { margin-left: 80px; }

/* page head */
.page {
  width: 100%;
  max-width: 1941px;
  margin: 0 auto;
  padding: 25px 80px 23px;
}
.crumbs { display: flex; align-items: center; height: 32px; font-size: 16px; font-weight: 700; letter-spacing: 1px; }
.redacted { width: 184px; height: 22px; background: #d3d6db; filter: blur(6px); }
.slash { margin: 0 17px 0 12px; color: #596882; font-weight: 400; }
.showing { margin-top: 13px; height: 26px; line-height: 26px; color: #8392a5; font-size: 19px; }
.ranges { display: flex; gap: 6px; height: 47px; }
.ranges button { font-size: 16px; font-weight: 700; letter-spacing: 1px; color: #596882; padding: 0 23px; }
.group { display: flex; border: 1px solid #c0ccda; border-radius: 5px; }
.group button { border-left: 1px solid #c0ccda; }
.group button:first-child { border-left: 0; }
.ranges .active { margin: -1px 0; background: #0150c8; color: #fff; border-color: #0150c8; }
.ranges .filters { border-radius: 5px; background: #3b4863; color: #fff; }
.rule { margin: 41px 0 25px; border: 0; border-top: 2px solid #e5e9f2; }

/* columns */
.columns { position: relative; display: flex; gap: 48px; align-items: flex-start; }
.side { width: 257px; display: flex; flex-direction: column; }
.side h2 { height: 40px; line-height: 26px; font-size: 22px; font-weight: 600; color: #001737; }
.side a { height: 57px; padding-left: 25px; line-height: 57px; border-radius: 5px; color: #596882; font-size: 21px; }
.side .current { background: #0168fa; color: #fff; }
.card { flex: 1; min-width: 0; border: 1px solid #e5e9f2; border-radius: 5px; }
.card-head { padding: 29px 39px 0; height: 155px; }
.legend { display: flex; align-items: center; height: 32px; font-size: 22px; }
.legend a { font-size: 24px; }
.legend .ico { margin-right: 7px; }
.legend .pin-ico { margin: 0 13px 0 12px; }
.card-head p { margin-top: 25px; line-height: 28px; font-size: 19px; color: #8392a5; white-space: nowrap; }

/* map */
.map { position: relative; font-family: "Roboto", sans-serif; }
.canvas { width: 100%; height: auto; border-radius: 0 0 5px 5px; overflow: hidden; }
.land { fill: #f7f7f7; }
.green { fill: #d2f7e1; }
.wood { fill: #bcf0d3; }
.wood .green { fill: #d2f7e1; }
.wood .land { fill: #f7f7f7; }
.land .wood { fill: #c2f0d3; }
.sand { fill: #f5eee4; }
.water { fill: #90daee; }
.air, .land .air, .wood .air { fill: #d6def5; }
.creek { fill: none; stroke: #90daee; stroke-width: 3; }
.net { fill: none; stroke: #dfe5ee; stroke-width: 2; }
.minor, .pale, .major { fill: none; stroke-linejoin: round; stroke-linecap: round; }
.minor path, .pale path, .major path { vector-effect: non-scaling-stroke; }
.minor path { stroke: #a9c3cf; stroke-width: 1; }
.minor .wide { stroke: #9db4cb; stroke-width: 2; }
.pale path { stroke: #d5dde9; stroke-width: 2; }
.major path { stroke: #a3b1d0; stroke-width: 4; }
.major .big { stroke: #99a8c9; stroke-width: 5; }
.rail { fill: none; stroke: #94a6c0; stroke-width: 2; }
.border { fill: none; stroke: #6e8f9e; stroke-width: 2; stroke-dasharray: 4 4; }
.place { font-size: 19px; fill: #454545; stroke: #fff; stroke-width: 3px; paint-order: stroke; stroke-linejoin: round; }
.mid { text-anchor: middle; }
.end { text-anchor: end; }
.city { font-size: 24px; font-weight: 500; fill: #333; }
.metro { font-size: 31px; font-weight: 500; fill: #333; }
.bay { font-size: 19px; fill: #2795a7; }
.shield { font-size: 15px; font-weight: 500; text-anchor: middle; fill: #555; }
.white text { fill: #fff; }
.count { font: 700 16px "Roboto", sans-serif; text-anchor: middle; }
.count text { fill: #fff; }

.types { position: absolute; left: 15px; top: 15px; display: flex; height: 62px; box-shadow: 0 1px 4px rgba(0, 0, 0, .3); border-radius: 3px; background: #fff; }
.types button { padding: 0 26px; font-size: 28px; color: #565656; }
.types .on { color: #000; font-weight: 500; border-right: 1px solid #e6e6e6; }
.ctl { position: absolute; right: 16px; width: 62px; height: 62px; display: grid; place-items: center; background: #fff; border-radius: 3px; box-shadow: 0 1px 4px rgba(0, 0, 0, .3); }
.full { top: 15px; }
.camera { bottom: 150px; border-radius: 50%; }
.street { bottom: 38px; }
.draw { position: absolute; left: 701px; bottom: 9px; display: flex; height: 37px; background: #fff; box-shadow: 0 1px 4px rgba(0, 0, 0, .3); }
.draw button { width: 37px; display: grid; place-items: center; }
.google { position: absolute; left: 16px; bottom: 4px; font: 700 28px/36px "Lato", sans-serif; text-shadow: 0 0 2px #fff, 0 0 2px #fff; }
.b { color: #4285f4; }
.r { color: #ea4335; }
.y { color: #fbbc05; }
.g { color: #34a853; }
.credits { position: absolute; right: 0; bottom: 0; display: flex; gap: 2px; font-size: 16px; line-height: 22px; color: #000; }
.credits > * { padding: 0 8px; background: rgba(245, 245, 245, .7); color: #000; }
.spotlight { position: absolute; inset: -30px -28px -28px -28px; border: 10px solid #2ed9ff; pointer-events: none; }
.pointer { position: absolute; left: -84px; top: 312px; }

.foot { flex: 1; min-height: 70px; padding: 22px 39px; border-top: 2px solid #e5e9f2; background: #f9fafc; color: #596882; font-size: 16px; line-height: 22px; letter-spacing: 1px; }

.scroll { width: 19px; padding: 4px 3px 0 4px; border-left: 1px solid #e6e6e6; background: #fafafa; }
.thumb { height: 91vh; border-radius: 6px; background: #c1c1c1; }
```
